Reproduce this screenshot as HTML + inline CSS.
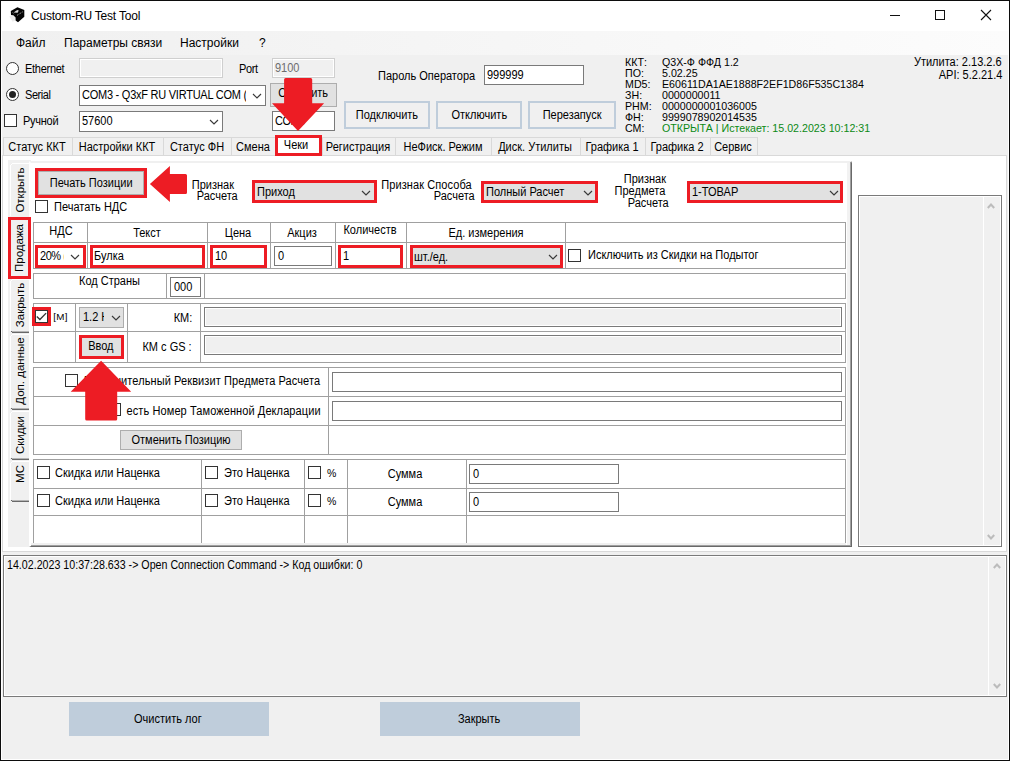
<!DOCTYPE html>
<html lang="ru"><head><meta charset="utf-8"><title>Custom-RU Test Tool</title>
<style>
*{box-sizing:border-box;margin:0;padding:0}
html,body{width:1010px;height:761px;overflow:hidden;background:#f0f0f0}
body{position:relative;font-family:"Liberation Sans",sans-serif;font-size:11px;color:#000}
.a{position:absolute}
.t{white-space:nowrap}
.s{font-size:12px;display:inline-block;transform:scaleX(.917);transform-origin:left center}
.s.c{transform-origin:center center}
.rb{border:1px solid #333;border-radius:50%;background:#fff}
.cb{border:1px solid #333;background:#fff}
.tb{border:1px solid #7a7a7a;background:#fff}
.tbd{border:1px solid #cfcfcf;background:#f0f0f0;box-shadow:inset 0 0 0 1px #fff}
.tbd2{border:1px solid #7a7a7a;background:#f0f0f0;box-shadow:inset 0 0 0 1px #fff}
.cbx{border:1px solid #7a7a7a;background:#fff}
.cbx.g{border:1px solid #adadad;background:#e1e1e1}
.btn{border:2px solid #bfcddb;background:#f0f0f0}
.btn2{border:1px solid #adadad;background:#e1e1e1}
.btn3{background:#bfcddb;border:none}
.tbl{border:1px solid #a0a0a0;background:#fff}
</style></head>
<body>
<div class="a " style="left:0px;top:0px;width:1010px;height:761px;background:#f0f0f0;border:1px solid #0c0c0c"></div>
<div class="a " style="left:1px;top:1px;width:1008px;height:759px;border:1px solid #fff;border-top:none"></div>
<div class="a " style="left:1px;top:1px;width:1008px;height:30px;background:#fff"></div>
<svg class="a" style="left:0px;top:0px" width="32" height="30" viewBox="0 0 32 30">
<path d="M9.3 16.6 L13.5 14.2 L16 17 L15.4 20.6 L12.6 21.8 Z" fill="#ececec"/>
<path d="M17.4 7.2 L24.3 10 L24.3 16.7 L18 22.2 L15.6 20.4 L15.6 17.5 L13.4 15.2 L11 14.9 L10.8 11 Z" fill="#050505"/>
<path d="M13.6 12.6 L17.2 9.9 L18.8 10.5 L17.6 12.7 Z" fill="#d8d8d8"/>
<path d="M17 15.4 L23.2 11.5" stroke="#b0b0b0" stroke-width="1" stroke-dasharray="1 0.9"/>
<path d="M12 12 L14.5 14.3" stroke="#999" stroke-width="0.7" stroke-dasharray="0.8 0.8"/>
</svg>
<div class="a t" style="top:8.0px;line-height:16px;font-size:12px;left:31px;letter-spacing:-0.2px;">Custom-RU Test Tool</div>
<svg class="a" style="left:880px;top:1px" width="128" height="30" viewBox="0 0 128 30"><path d="M10 14.5 H20" stroke="#111" stroke-width="1"/><rect x="55.5" y="9.5" width="9" height="9" fill="none" stroke="#111" stroke-width="1"/><path d="M101 9 L111 19 M111 9 L101 19" stroke="#111" stroke-width="1.1"/></svg>
<div class="a " style="left:2px;top:31px;width:1006px;height:24px;background:linear-gradient(to right,#f0f0f0,#fcfcfc)"></div>
<div class="a t" style="top:35.0px;line-height:16px;font-size:12px;left:16px;">Файл</div>
<div class="a t" style="top:35.0px;line-height:16px;font-size:12px;left:64px;">Параметры связи</div>
<div class="a t" style="top:35.0px;line-height:16px;font-size:12px;left:180px;">Настройки</div>
<div class="a t" style="top:35.0px;line-height:16px;font-size:12px;left:259px;">?</div>
<div class="a rb" style="left:6px;top:62px;width:13px;height:13px;"></div>
<div class="a t" style="top:61.5px;line-height:14px;font-size:12px;left:25px;transform:scaleX(0.917);transform-origin:left center;letter-spacing:-0.3px;">Ethernet</div>
<div class="a tbd" style="left:79px;top:58px;width:144px;height:20px;"></div>
<div class="a t" style="top:61.5px;line-height:14px;font-size:12px;left:239px;transform:scaleX(0.917);transform-origin:left center;letter-spacing:-0.4px;">Port</div>
<div class="a tbd" style="left:272px;top:58px;width:63px;height:20px;"><span class="t s" style="position:absolute;left:2px;top:0.4px;line-height:18px;color:#6d6d6d;">9100</span></div>
<div class="a rb" style="left:6px;top:88px;width:13px;height:13px;"><div style="position:absolute;left:2px;top:2px;width:7px;height:7px;border-radius:50%;background:#222"></div></div>
<div class="a t" style="top:88.0px;line-height:14px;font-size:12px;left:25px;transform:scaleX(0.917);transform-origin:left center;letter-spacing:-0.5px;">Serial</div>
<div class="a cbx" style="left:79px;top:85px;width:187px;height:21px;"><span class="a" style="left:2px;top:0;height:19px;width:164px;overflow:hidden"><span class="t s" style="position:absolute;left:0;top:0px;line-height:19px;"><span style="letter-spacing:-0.27px">COM3 - Q3xF RU VIRTUAL COM (COM3)</span></span></span></div>
<svg class="a" style="left:251.5px;top:93.0px" width="10" height="6" viewBox="0 0 10 6"><path d="M1 1 L5 5 L9 1" fill="none" stroke="#3a3a3a" stroke-width="1.15"/></svg>
<div class="a btn2" style="left:270px;top:83px;width:67px;height:24px;line-height:22px;text-align:center"><span class="t s c" style="position:relative;top:-2px;left:0px">Обновить</span></div>
<div class="a cb" style="left:4px;top:114px;width:13px;height:13px;"></div>
<div class="a t" style="top:114.0px;line-height:14px;font-size:12px;left:23px;transform:scaleX(0.917);transform-origin:left center;letter-spacing:-0.3px;">Ручной</div>
<div class="a cbx" style="left:79px;top:111px;width:144px;height:21px;"><span class="a" style="left:2px;top:0;height:19px;width:122px;overflow:hidden"><span class="t s" style="position:absolute;left:0;top:0px;line-height:19px;">57600</span></span></div>
<svg class="a" style="left:208.5px;top:119.0px" width="10" height="6" viewBox="0 0 10 6"><path d="M1 1 L5 5 L9 1" fill="none" stroke="#3a3a3a" stroke-width="1.15"/></svg>
<div class="a tb" style="left:272px;top:111px;width:63px;height:20px;"><span class="t s" style="position:absolute;left:2px;top:0.4px;line-height:18px;"><span style="letter-spacing:-0.6px">COM3</span></span></div>
<div class="a t" style="top:69.0px;line-height:14px;font-size:12px;left:378px;transform:scaleX(0.917);transform-origin:left center;">Пароль Оператора</div>
<div class="a tb" style="left:484px;top:65px;width:100px;height:20px;"><span class="t s" style="position:absolute;left:2px;top:0.4px;line-height:18px;">999999</span></div>
<div class="a btn" style="left:344px;top:101px;width:86px;height:28px;line-height:24px;text-align:center"><span class="t s c" style="position:relative;top:0px;left:0px">Подключить</span></div>
<div class="a btn" style="left:436px;top:101px;width:86px;height:28px;line-height:24px;text-align:center"><span class="t s c" style="position:relative;top:0px;left:0px">Отключить</span></div>
<div class="a btn" style="left:528px;top:101px;width:88px;height:28px;line-height:24px;text-align:center"><span class="t s c" style="position:relative;top:0px;left:0px">Перезапуск</span></div>
<div class="a t" style="top:56.0px;line-height:12px;font-size:10.67px;left:625px;">ККТ:</div>
<div class="a t" style="top:56.0px;line-height:12px;font-size:10.67px;left:662px;">Q3X-Ф ФФД 1.2</div>
<div class="a t" style="top:67.0px;line-height:12px;font-size:10.67px;left:625px;">ПО:</div>
<div class="a t" style="top:67.0px;line-height:12px;font-size:10.67px;left:662px;">5.02.25</div>
<div class="a t" style="top:78.0px;line-height:12px;font-size:10.67px;left:625px;">MD5:</div>
<div class="a t" style="top:78.0px;line-height:12px;font-size:10.67px;left:662px;">E60611DA1AE1888F2EF1D86F535C1384</div>
<div class="a t" style="top:89.0px;line-height:12px;font-size:10.67px;left:625px;">ЗН:</div>
<div class="a t" style="top:89.0px;line-height:12px;font-size:10.67px;left:662px;">0000000011</div>
<div class="a t" style="top:100.0px;line-height:12px;font-size:10.67px;left:625px;">РНМ:</div>
<div class="a t" style="top:100.0px;line-height:12px;font-size:10.67px;left:662px;">0000000001036005</div>
<div class="a t" style="top:111.0px;line-height:12px;font-size:10.67px;left:625px;">ФН:</div>
<div class="a t" style="top:111.0px;line-height:12px;font-size:10.67px;left:662px;">9999078902014535</div>
<div class="a t" style="top:122.0px;line-height:12px;font-size:10.67px;left:625px;">СМ:</div>
<div class="a t" style="top:122.0px;line-height:12px;font-size:10.67px;color:#0b8a14;left:662px;">ОТКРЫТА | Истекает: 15.02.2023 10:12:31</div>
<div class="a t" style="top:55.0px;line-height:14px;font-size:12px;right:8px;text-align:right;transform:scaleX(0.917);transform-origin:right center;">Утилита: 2.13.2.6</div>
<div class="a t" style="top:68.0px;line-height:14px;font-size:12px;right:8px;text-align:right;transform:scaleX(0.917);transform-origin:right center;">API: 5.2.21.4</div>
<div class="a " style="left:2px;top:155px;width:1005px;height:397px;background:#fff;border:1px solid #d9d9d9"></div>
<div class="a " style="left:3px;top:137px;width:70px;height:19px;background:#f0f0f0;border:1px solid #d9d9d9;"></div>
<div class="a t" style="top:139.7px;line-height:14px;font-size:12px;left:-113.0px;width:300px;text-align:center;transform:scaleX(0.917);transform-origin:center center;">Статус ККТ</div>
<div class="a " style="left:72px;top:137px;width:92px;height:19px;background:#f0f0f0;border:1px solid #d9d9d9;"></div>
<div class="a t" style="top:139.7px;line-height:14px;font-size:12px;left:-33.0px;width:300px;text-align:center;transform:scaleX(0.917);transform-origin:center center;">Настройки ККТ</div>
<div class="a " style="left:163px;top:137px;width:69px;height:19px;background:#f0f0f0;border:1px solid #d9d9d9;"></div>
<div class="a t" style="top:139.7px;line-height:14px;font-size:12px;left:46.5px;width:300px;text-align:center;transform:scaleX(0.917);transform-origin:center center;">Статус ФН</div>
<div class="a " style="left:231px;top:137px;width:45px;height:19px;background:#f0f0f0;border:1px solid #d9d9d9;"></div>
<div class="a t" style="top:139.7px;line-height:14px;font-size:12px;left:102.5px;width:300px;text-align:center;transform:scaleX(0.917);transform-origin:center center;">Смена</div>
<div class="a " style="left:276px;top:136px;width:45px;height:20px;background:#fff"></div>
<div class="a t" style="top:137.8px;line-height:14px;font-size:12px;left:146.0px;width:300px;text-align:center;transform:scaleX(0.917);transform-origin:center center;">Чеки</div>
<div class="a " style="left:322px;top:137px;width:74px;height:19px;background:#f0f0f0;border:1px solid #d9d9d9;"></div>
<div class="a t" style="top:139.7px;line-height:14px;font-size:12px;left:208.0px;width:300px;text-align:center;transform:scaleX(0.917);transform-origin:center center;">Регистрация</div>
<div class="a " style="left:395px;top:137px;width:97px;height:19px;background:#f0f0f0;border:1px solid #d9d9d9;"></div>
<div class="a t" style="top:139.7px;line-height:14px;font-size:12px;left:292.5px;width:300px;text-align:center;transform:scaleX(0.917);transform-origin:center center;">НеФиск. Режим</div>
<div class="a " style="left:491px;top:137px;width:90px;height:19px;background:#f0f0f0;border:1px solid #d9d9d9;"></div>
<div class="a t" style="top:139.7px;line-height:14px;font-size:12px;left:385.0px;width:300px;text-align:center;transform:scaleX(0.917);transform-origin:center center;">Диск. Утилиты</div>
<div class="a " style="left:580px;top:137px;width:66px;height:19px;background:#f0f0f0;border:1px solid #d9d9d9;"></div>
<div class="a t" style="top:139.7px;line-height:14px;font-size:12px;left:462.0px;width:300px;text-align:center;transform:scaleX(0.917);transform-origin:center center;">Графика 1</div>
<div class="a " style="left:645px;top:137px;width:66px;height:19px;background:#f0f0f0;border:1px solid #d9d9d9;"></div>
<div class="a t" style="top:139.7px;line-height:14px;font-size:12px;left:527.0px;width:300px;text-align:center;transform:scaleX(0.917);transform-origin:center center;">Графика 2</div>
<div class="a " style="left:710px;top:137px;width:48px;height:19px;background:#f0f0f0;border:1px solid #d9d9d9;"></div>
<div class="a t" style="top:139.7px;line-height:14px;font-size:12px;left:583.0px;width:300px;text-align:center;transform:scaleX(0.917);transform-origin:center center;">Сервис</div>
<div class="a" style="left:275px;top:135px;width:47px;height:21px;border:3px solid #ed1c24"></div>
<div class="a " style="left:8px;top:160px;width:23px;height:387px;background:#f0f0f0"></div>
<div class="a " style="left:29px;top:161px;width:823px;height:386px;background:#fff;border-left:2px solid #fff;border-top:2px solid #f0f0f0;border-right:1px solid #696969;border-bottom:1px solid #696969"></div>
<div class="a " style="left:31px;top:545px;width:820px;height:1px;background:#a0a0a0"></div>
<div class="a " style="left:850px;top:162px;width:1px;height:384px;background:#a0a0a0"></div>
<div class="a " style="left:847px;top:163px;width:3px;height:382px;background:#f2f2f2"></div>
<div class="a " style="left:31px;top:543px;width:815px;height:2px;background:#f0f0f0"></div>
<div class="a " style="left:10px;top:165px;width:1px;height:51px;background:#fff"></div>
<div class="a " style="left:12px;top:163px;width:17px;height:1px;background:#fff"></div>
<div class="a " style="left:11px;top:164px;width:1px;height:1px;background:#fff"></div>
<div class="a t" style="left:-30.5px;top:181.5px;width:100px;height:16px;line-height:16px;text-align:center;font-size:11.5px;transform:rotate(-90deg)">Открыть</div>
<div class="a " style="left:10px;top:281px;width:1px;height:50px;background:#fff"></div>
<div class="a " style="left:12px;top:279px;width:17px;height:1px;background:#fff"></div>
<div class="a " style="left:11px;top:280px;width:1px;height:1px;background:#fff"></div>
<div class="a " style="left:12px;top:332px;width:17px;height:1px;background:#696969"></div>
<div class="a " style="left:11px;top:331px;width:1px;height:1px;background:#696969"></div>
<div class="a " style="left:12px;top:331px;width:17px;height:1px;background:#b4b4b4"></div>
<div class="a t" style="left:-30.5px;top:297.0px;width:100px;height:16px;line-height:16px;text-align:center;font-size:11.5px;transform:rotate(-90deg)">Закрыть</div>
<div class="a " style="left:10px;top:336px;width:1px;height:72px;background:#fff"></div>
<div class="a " style="left:12px;top:334px;width:17px;height:1px;background:#fff"></div>
<div class="a " style="left:11px;top:335px;width:1px;height:1px;background:#fff"></div>
<div class="a " style="left:12px;top:409px;width:17px;height:1px;background:#696969"></div>
<div class="a " style="left:11px;top:408px;width:1px;height:1px;background:#696969"></div>
<div class="a " style="left:12px;top:408px;width:17px;height:1px;background:#b4b4b4"></div>
<div class="a t" style="left:-30.5px;top:363.0px;width:100px;height:16px;line-height:16px;text-align:center;font-size:11.5px;transform:rotate(-90deg)">Доп. данные</div>
<div class="a " style="left:10px;top:413px;width:1px;height:45px;background:#fff"></div>
<div class="a " style="left:12px;top:411px;width:17px;height:1px;background:#fff"></div>
<div class="a " style="left:11px;top:412px;width:1px;height:1px;background:#fff"></div>
<div class="a " style="left:12px;top:459px;width:17px;height:1px;background:#696969"></div>
<div class="a " style="left:11px;top:458px;width:1px;height:1px;background:#696969"></div>
<div class="a " style="left:12px;top:458px;width:17px;height:1px;background:#b4b4b4"></div>
<div class="a t" style="left:-30.5px;top:426.5px;width:100px;height:16px;line-height:16px;text-align:center;font-size:11.5px;transform:rotate(-90deg)">Скидки</div>
<div class="a " style="left:10px;top:463px;width:1px;height:37px;background:#fff"></div>
<div class="a " style="left:12px;top:461px;width:17px;height:1px;background:#fff"></div>
<div class="a " style="left:11px;top:462px;width:1px;height:1px;background:#fff"></div>
<div class="a " style="left:12px;top:501px;width:17px;height:1px;background:#696969"></div>
<div class="a " style="left:11px;top:500px;width:1px;height:1px;background:#696969"></div>
<div class="a " style="left:12px;top:500px;width:17px;height:1px;background:#b4b4b4"></div>
<div class="a t" style="left:-30.5px;top:466px;width:100px;height:16px;line-height:16px;text-align:center;font-size:11.5px;transform:rotate(-90deg)">МС</div>
<div class="a t" style="left:-31.5px;top:240px;width:100px;height:16px;line-height:16px;text-align:center;font-size:11.5px;transform:rotate(-90deg)">Продажа</div>
<div class="a" style="left:8px;top:217px;width:23px;height:62px;border:3px solid #ed1c24"></div>
<div class="a btn2" style="left:38px;top:171px;width:106px;height:24px;line-height:22px;text-align:center"><span class="t s c" style="position:relative;top:0px;left:0px">Печать Позиции</span></div>
<div class="a" style="left:35px;top:168px;width:112px;height:30px;border:3px solid #ed1c24"></div>
<div class="a cb" style="left:35px;top:200px;width:13px;height:13px;"></div>
<div class="a t" style="top:199.5px;line-height:14px;font-size:12px;left:54.3px;transform:scaleX(0.917);transform-origin:left center;">Печатать НДС</div>
<svg class="a" style="left:148px;top:163px" width="42" height="42" viewBox="0 0 42 42"><path d="M1.9 21 L21.9 3 L21.9 10.9 L37.5 10.9 Q39 10.9 39 12.4 L39 29.5 Q39 31 37.5 31 L21.9 31 L21.9 38.9 Z" fill="#ed1c24"/></svg>
<div class="a t" style="top:177.7px;line-height:14px;font-size:12px;right:775.5px;text-align:right;transform:scaleX(0.917);transform-origin:right center;">Признак</div>
<div class="a t" style="top:188.8px;line-height:14px;font-size:12px;right:772.5px;text-align:right;transform:scaleX(0.917);transform-origin:right center;">Расчета</div>
<div class="a cbx g" style="left:254px;top:182px;width:121px;height:20px;"><span class="a" style="left:2px;top:0;height:18px;width:99px;overflow:hidden"><span class="t s" style="position:absolute;left:0;top:0.4px;line-height:18px;">Приход</span></span></div>
<svg class="a" style="left:361px;top:189.5px" width="10" height="6" viewBox="0 0 10 6"><path d="M1 1 L5 5 L9 1" fill="none" stroke="#3a3a3a" stroke-width="1.15"/></svg>
<div class="a" style="left:252px;top:180px;width:125px;height:23px;border:3px solid #ed1c24"></div>
<div class="a t" style="top:177.7px;line-height:14px;font-size:12px;right:538px;text-align:right;transform:scaleX(0.917);transform-origin:right center;letter-spacing:0.1px;">Признак Способа</div>
<div class="a t" style="top:188.8px;line-height:14px;font-size:12px;right:535px;text-align:right;transform:scaleX(0.917);transform-origin:right center;">Расчета</div>
<div class="a cbx g" style="left:483px;top:183px;width:113px;height:19px;"><span class="a" style="left:2px;top:0;height:17px;width:91px;overflow:hidden"><span class="t s" style="position:absolute;left:0;top:0.4px;line-height:17px;">Полный Расчет</span></span></div>
<svg class="a" style="left:583px;top:190.0px" width="10" height="6" viewBox="0 0 10 6"><path d="M1 1 L5 5 L9 1" fill="none" stroke="#3a3a3a" stroke-width="1.15"/></svg>
<div class="a" style="left:481px;top:181px;width:117px;height:22px;border:3px solid #ed1c24"></div>
<div class="a t" style="top:171.8px;line-height:14px;font-size:12px;right:344.29999999999995px;text-align:right;transform:scaleX(0.917);transform-origin:right center;">Признак</div>
<div class="a t" style="top:183.7px;line-height:14px;font-size:12px;right:344.29999999999995px;text-align:right;transform:scaleX(0.917);transform-origin:right center;">Предмета</div>
<div class="a t" style="top:195.6px;line-height:14px;font-size:12px;right:341.29999999999995px;text-align:right;transform:scaleX(0.917);transform-origin:right center;">Расчета</div>
<div class="a cbx g" style="left:689px;top:183px;width:152px;height:19px;"><span class="a" style="left:2px;top:0;height:17px;width:130px;overflow:hidden"><span class="t s" style="position:absolute;left:0;top:0.4px;line-height:17px;">1-ТОВАР</span></span></div>
<svg class="a" style="left:828.5px;top:190.0px" width="10" height="6" viewBox="0 0 10 6"><path d="M1 1 L5 5 L9 1" fill="none" stroke="#3a3a3a" stroke-width="1.15"/></svg>
<div class="a" style="left:687px;top:181px;width:156px;height:22px;border:3px solid #ed1c24"></div>
<div class="a tbl" style="left:33px;top:222px;width:813px;height:47px;"></div>
<div class="a " style="left:87px;top:222px;width:1px;height:47px;background:#a0a0a0"></div>
<div class="a " style="left:207px;top:222px;width:1px;height:47px;background:#a0a0a0"></div>
<div class="a " style="left:270px;top:222px;width:1px;height:47px;background:#a0a0a0"></div>
<div class="a " style="left:335px;top:222px;width:1px;height:47px;background:#a0a0a0"></div>
<div class="a " style="left:406px;top:222px;width:1px;height:47px;background:#a0a0a0"></div>
<div class="a " style="left:565px;top:222px;width:1px;height:47px;background:#a0a0a0"></div>
<div class="a " style="left:33px;top:242px;width:813px;height:1px;background:#a0a0a0"></div>
<div class="a t" style="top:223.5px;line-height:14px;font-size:12px;left:-89.5px;width:300px;text-align:center;transform:scaleX(0.917);transform-origin:center center;">НДС</div>
<div class="a t" style="top:226.0px;line-height:14px;font-size:12px;left:-3px;width:300px;text-align:center;transform:scaleX(0.917);transform-origin:center center;">Текст</div>
<div class="a t" style="top:226.0px;line-height:14px;font-size:12px;left:87.80000000000001px;width:300px;text-align:center;transform:scaleX(0.917);transform-origin:center center;">Цена</div>
<div class="a t" style="top:226.0px;line-height:14px;font-size:12px;left:152.2px;width:300px;text-align:center;transform:scaleX(0.917);transform-origin:center center;">Акциз</div>
<div class="a t" style="top:223.0px;line-height:14px;font-size:12px;left:219.8px;width:300px;text-align:center;transform:scaleX(0.917);transform-origin:center center;">Количеств</div>
<div class="a t" style="top:226.0px;line-height:14px;font-size:12px;left:335.5px;width:300px;text-align:center;transform:scaleX(0.917);transform-origin:center center;">Ед. измерения</div>
<div class="a cbx" style="left:37px;top:247px;width:47px;height:19px;"><span class="a" style="left:2px;top:0;height:17px;width:24px;overflow:hidden"><span class="t s" style="position:absolute;left:0;top:0px;line-height:17px;"><span style="letter-spacing:-0.5px">20% (</span></span></span></div>
<svg class="a" style="left:69.5px;top:254.0px" width="10" height="6" viewBox="0 0 10 6"><path d="M1 1 L5 5 L9 1" fill="none" stroke="#3a3a3a" stroke-width="1.15"/></svg>
<div class="a" style="left:35px;top:245px;width:51px;height:23px;border:3px solid #ed1c24"></div>
<div class="a tb" style="left:92px;top:247px;width:111px;height:19px;"><span class="t s" style="position:absolute;left:1px;top:0.4px;line-height:17px;">Булка</span></div>
<div class="a" style="left:90px;top:245px;width:115px;height:23px;border:3px solid #ed1c24"></div>
<div class="a tb" style="left:212px;top:247px;width:53px;height:19px;"><span class="t s" style="position:absolute;left:2px;top:0.4px;line-height:17px;">10</span></div>
<div class="a" style="left:210px;top:245px;width:57px;height:23px;border:3px solid #ed1c24"></div>
<div class="a tb" style="left:274px;top:246px;width:58px;height:20px;"><span class="t s" style="position:absolute;left:3px;top:0.4px;line-height:18px;">0</span></div>
<div class="a tb" style="left:340px;top:247px;width:61px;height:19px;"><span class="t s" style="position:absolute;left:2px;top:0.4px;line-height:17px;">1</span></div>
<div class="a" style="left:338px;top:245px;width:65px;height:23px;border:3px solid #ed1c24"></div>
<div class="a cbx g" style="left:412px;top:247px;width:149px;height:19px;"><span class="a" style="left:1px;top:0;height:17px;width:127px;overflow:hidden"><span class="t s" style="position:absolute;left:0;top:1px;line-height:17px;">шт./ед.</span></span></div>
<svg class="a" style="left:548px;top:254.0px" width="10" height="6" viewBox="0 0 10 6"><path d="M1 1 L5 5 L9 1" fill="none" stroke="#3a3a3a" stroke-width="1.15"/></svg>
<div class="a" style="left:410px;top:245px;width:153px;height:23px;border:3px solid #ed1c24"></div>
<div class="a cb" style="left:568px;top:249px;width:13px;height:13px;"></div>
<div class="a t" style="top:248.0px;line-height:14px;font-size:12px;left:588px;transform:scaleX(0.917);transform-origin:left center;">Исключить из Скидки на Подытог</div>
<div class="a tbl" style="left:33px;top:273px;width:813px;height:26px;"></div>
<div class="a " style="left:166px;top:273px;width:1px;height:26px;background:#a0a0a0"></div>
<div class="a " style="left:204px;top:273px;width:1px;height:26px;background:#a0a0a0"></div>
<div class="a t" style="top:274.0px;line-height:14px;font-size:12px;left:79px;transform:scaleX(0.917);transform-origin:left center;">Код Страны</div>
<div class="a tb" style="left:170px;top:277px;width:31px;height:20px;"><span class="t s" style="position:absolute;left:3px;top:0.4px;line-height:18px;">000</span></div>
<div class="a tbl" style="left:33px;top:303px;width:813px;height:60px;"></div>
<div class="a " style="left:75px;top:303px;width:1px;height:60px;background:#a0a0a0"></div>
<div class="a " style="left:127px;top:303px;width:1px;height:60px;background:#a0a0a0"></div>
<div class="a " style="left:200px;top:303px;width:1px;height:60px;background:#a0a0a0"></div>
<div class="a " style="left:33px;top:331px;width:813px;height:1px;background:#a0a0a0"></div>
<div class="a cb" style="left:35px;top:310px;width:13px;height:13px;"><svg width="11" height="11" viewBox="0 0 11 11" style="position:absolute;left:0;top:0"><path d="M0.8 5.5 L3.9 8.5 L10.1 2.1" fill="none" stroke="#333" stroke-width="1.35"/></svg></div>
<div class="a" style="left:32px;top:307px;width:19px;height:19px;border:3px solid #ed1c24"></div>
<div class="a t" style="top:309.8px;line-height:14px;font-size:9.8px;left:53.3px;letter-spacing:0.3px;">[М]</div>
<div class="a cbx g" style="left:79px;top:307px;width:45px;height:21px;"><span class="a" style="left:3px;top:0;height:19px;width:21px;overflow:hidden"><span class="t s" style="position:absolute;left:0;top:0px;line-height:19px;">1.2 Н</span></span></div>
<svg class="a" style="left:110.5px;top:315.0px" width="10" height="6" viewBox="0 0 10 6"><path d="M1 1 L5 5 L9 1" fill="none" stroke="#3a3a3a" stroke-width="1.15"/></svg>
<div class="a t" style="top:311.0px;line-height:14px;font-size:12px;right:818px;text-align:right;transform:scaleX(0.917);transform-origin:right center;">КМ:</div>
<div class="a tbd2" style="left:204px;top:307px;width:638px;height:20px;"></div>
<div class="a btn2" style="left:81px;top:337px;width:41px;height:20px;line-height:18px;text-align:center"><span class="t s c" style="position:relative;top:-1px;left:-0.5px">Ввод</span></div>
<div class="a" style="left:79px;top:335px;width:45px;height:24px;border:3px solid #ed1c24"></div>
<div class="a t" style="top:340.0px;line-height:14px;font-size:12px;right:818px;text-align:right;transform:scaleX(0.917);transform-origin:right center;">КМ с GS :</div>
<div class="a tbd2" style="left:204px;top:335px;width:638px;height:20px;"></div>
<div class="a tbl" style="left:33px;top:367px;width:813px;height:88px;"></div>
<div class="a " style="left:328px;top:367px;width:1px;height:88px;background:#a0a0a0"></div>
<div class="a " style="left:33px;top:396px;width:813px;height:1px;background:#a0a0a0"></div>
<div class="a " style="left:33px;top:425px;width:813px;height:1px;background:#a0a0a0"></div>
<div class="a cb" style="left:65px;top:374px;width:13px;height:13px;"></div>
<div class="a t" style="top:374.3px;line-height:14px;font-size:12px;right:689.5px;text-align:right;transform:scaleX(0.917);transform-origin:right center;letter-spacing:0.1px;">Дополнительный Реквизит Предмета Расчета</div>
<div class="a tb" style="left:332px;top:372px;width:510px;height:20px;"></div>
<div class="a cb" style="left:108px;top:403px;width:13px;height:13px;"></div>
<div class="a t" style="top:403.5px;line-height:14px;font-size:12px;right:689.5px;text-align:right;transform:scaleX(0.917);transform-origin:right center;letter-spacing:0.1px;">есть Номер Таможенной Декларации</div>
<div class="a tb" style="left:332px;top:401px;width:510px;height:20px;"></div>
<div class="a btn2" style="left:120px;top:430px;width:122px;height:20px;line-height:18px;text-align:center"><span class="t s c" style="position:relative;top:0px;left:0px">Отменить Позицию</span></div>
<div class="a tbl" style="left:33px;top:459px;width:813px;height:84px;border-bottom:none"></div>
<div class="a " style="left:201px;top:459px;width:1px;height:84px;background:#a0a0a0"></div>
<div class="a " style="left:304px;top:459px;width:1px;height:84px;background:#a0a0a0"></div>
<div class="a " style="left:347px;top:459px;width:1px;height:84px;background:#a0a0a0"></div>
<div class="a " style="left:466px;top:459px;width:1px;height:84px;background:#a0a0a0"></div>
<div class="a " style="left:33px;top:488px;width:813px;height:1px;background:#a0a0a0"></div>
<div class="a " style="left:33px;top:515px;width:813px;height:1px;background:#a0a0a0"></div>
<div class="a cb" style="left:37px;top:466px;width:13px;height:13px;"></div>
<div class="a t" style="top:465.8px;line-height:14px;font-size:12px;left:54.7px;transform:scaleX(0.917);transform-origin:left center;">Скидка или Наценка</div>
<div class="a cb" style="left:205px;top:466px;width:13px;height:13px;"></div>
<div class="a t" style="top:465.8px;line-height:14px;font-size:12px;left:223.5px;transform:scaleX(0.917);transform-origin:left center;">Это Наценка</div>
<div class="a cb" style="left:308px;top:466px;width:13px;height:13px;"></div>
<div class="a t" style="top:465.5px;line-height:14px;font-size:10.5px;left:327px;">%</div>
<div class="a t" style="top:466.8px;line-height:14px;font-size:12px;left:255px;width:300px;text-align:center;transform:scaleX(0.917);transform-origin:center center;">Сумма</div>
<div class="a tb" style="left:469px;top:464px;width:150px;height:20px;"><span class="t s" style="position:absolute;left:3px;top:0.4px;line-height:18px;">0</span></div>
<div class="a cb" style="left:37px;top:494px;width:13px;height:13px;"></div>
<div class="a t" style="top:494.0px;line-height:14px;font-size:12px;left:54.7px;transform:scaleX(0.917);transform-origin:left center;">Скидка или Наценка</div>
<div class="a cb" style="left:205px;top:494px;width:13px;height:13px;"></div>
<div class="a t" style="top:494.0px;line-height:14px;font-size:12px;left:223.5px;transform:scaleX(0.917);transform-origin:left center;">Это Наценка</div>
<div class="a cb" style="left:308px;top:494px;width:13px;height:13px;"></div>
<div class="a t" style="top:493.7px;line-height:14px;font-size:10.5px;left:327px;">%</div>
<div class="a t" style="top:495.0px;line-height:14px;font-size:12px;left:255px;width:300px;text-align:center;transform:scaleX(0.917);transform-origin:center center;">Сумма</div>
<div class="a tb" style="left:469px;top:492px;width:150px;height:20px;"><span class="t s" style="position:absolute;left:3px;top:0.4px;line-height:18px;">0</span></div>
<svg class="a" style="left:70px;top:360px" width="64" height="62" viewBox="0 0 64 62"><path d="M31.1 0.8 L61.2 31.7 L47.2 31.7 L47.2 59.1 Q47.2 60.6 45.7 60.6 L16.7 60.6 Q15.2 60.6 15.2 59.1 L15.2 31.7 L0.7 31.7 Z" fill="#ed1c24"/></svg>
<svg class="a" style="left:270px;top:76px" width="56" height="58" viewBox="0 0 56 58"><path d="M14.1 3.6 Q14.1 2.1 15.6 2.1 L40.7 2.1 Q42.2 2.1 42.2 3.6 L42.2 27.3 L54.1 27.3 L28 54.9 L2 27.3 L14.1 27.3 Z" fill="#ed1c24"/></svg>
<div class="a " style="left:858px;top:195px;width:144px;height:352px;border:1px solid #7a7a7a;background:#f0f0f0;box-shadow:inset 1px 1px 0 #fff, inset -1px -1px 0 #fff"></div>
<div class="a " style="left:983px;top:197px;width:1px;height:348px;background:#fff"></div>
<svg class="a" style="left:985.3px;top:201px" width="12" height="10" viewBox="-6 -5 12 10"><path d="M-3.2 2 L0 -1.5 L3.2 2" fill="none" stroke="#bcbcbc" stroke-width="2"/></svg>
<svg class="a" style="left:985.3px;top:532px" width="12" height="10" viewBox="-6 -5 12 10"><path d="M-3.2 -2 L0 1.5 L3.2 -2" fill="none" stroke="#bcbcbc" stroke-width="2"/></svg>
<div class="a " style="left:3px;top:555px;width:1004px;height:142px;border:1px solid #7a7a7a;background:#f0f0f0;box-shadow:inset 1px 1px 0 #fff, inset -1px -1px 0 #fff"></div>
<div class="a t" style="top:557.7px;line-height:14px;font-size:12px;left:6.5px;transform:scaleX(0.889);transform-origin:left center;">14.02.2023 10:37:28.633 -&gt; Open Connection Command -&gt; Код ошибки: 0</div>
<div class="a " style="left:988px;top:557px;width:1px;height:138px;background:#fff"></div>
<svg class="a" style="left:990.5px;top:561px" width="12" height="10" viewBox="-6 -5 12 10"><path d="M-3.2 2 L0 -1.5 L3.2 2" fill="none" stroke="#bcbcbc" stroke-width="2"/></svg>
<svg class="a" style="left:990.5px;top:681px" width="12" height="10" viewBox="-6 -5 12 10"><path d="M-3.2 -2 L0 1.5 L3.2 -2" fill="none" stroke="#bcbcbc" stroke-width="2"/></svg>
<div class="a btn3" style="left:69px;top:702px;width:200px;height:34px;line-height:34px;text-align:center"><span class="t s c" style="position:relative;top:0px;left:-1px">Очистить лог</span></div>
<div class="a btn3" style="left:380px;top:702px;width:200px;height:34px;line-height:34px;text-align:center"><span class="t s c" style="position:relative;top:0px;left:-1px">Закрыть</span></div>
</body></html>
